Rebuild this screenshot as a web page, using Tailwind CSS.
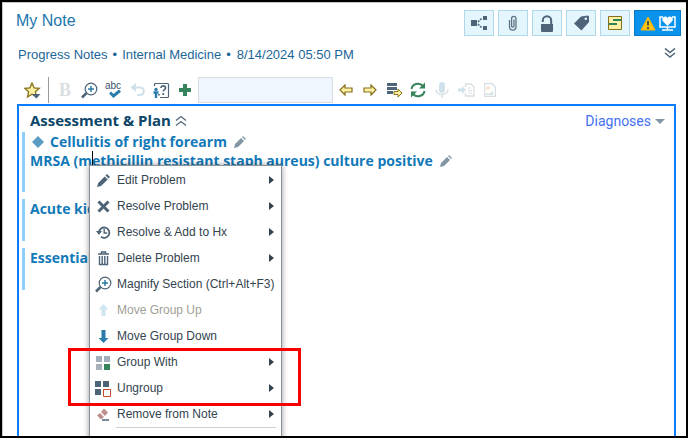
<!DOCTYPE html>
<html lang="en">
<head>
<meta charset="utf-8">
<meta name="viewport" content="width=device-width, initial-scale=1">
<title>My Note</title>
<script src="https://cdn.jsdelivr.net/npm/@tailwindcss/browser@4"></script>
</head>
<body class="bg-white font-['Liberation_Sans',Arial,sans-serif]">
<main class="relative flex h-screen flex-col overflow-hidden border-2 border-black">
  <div class="flex grow flex-col border-t border-l border-[#c8c8c8] pr-[3px] min-h-0">
    <header class="flex items-start justify-between pt-[7px] pl-[13px] pr-[2px]">
      <h1 class="pt-px text-base leading-5 text-[#1b75ad]">My Note</h1>
      <div class="flex gap-1">
        <button aria-label="Share" class="flex h-[26px] w-[30px] items-center justify-center border border-[#b0d8e8] bg-[#e3f6fd]">
          <svg width="18" height="16" viewBox="0 0 18 16" fill="#4d6478"><path d="M1 5h6v6H1zM13 1h4v4h-4zM13 11h4v4h-4z"/><path d="M8 7l4-4M8 9l4 4" stroke="#4d6478" stroke-width="1.5" stroke-dasharray="2 1"/></svg>
        </button>
        <button aria-label="Attach" class="flex h-[26px] w-[30px] items-center justify-center border border-[#b0d8e8] bg-[#e3f6fd]">
          <svg width="10" height="16" viewBox="0 0 10 16" fill="none" stroke="#5d7283" stroke-width="1.3"><path d="M1.5 5v7a3.2 3 0 0 0 6.5 0V3.500a2.200 2.200 0 0 0-4.400 0V11a1.200 1.200 0 0 0 2.400 0V4.500"/></svg>
        </button>
        <button aria-label="Unlock" class="flex h-[26px] w-[30px] items-center justify-center border border-[#b0d8e8] bg-[#e3f6fd]">
          <svg width="14" height="17" viewBox="0 0 14 17"><path d="M1 9h12v7a1 1 0 0 1-1 1H2a1 1 0 0 1-1-1z" fill="#4d6478"/><path d="M2.800 7V5.500a4 4 0 0 1 8.400 0V9" fill="none" stroke="#4d6478" stroke-width="2"/></svg>
        </button>
        <button aria-label="Tag" class="flex h-[26px] w-[30px] items-center justify-center border border-[#b0d8e8] bg-[#e3f6fd]">
          <svg width="17" height="16" viewBox="0 0 17 16"><path d="M1 8.500L8 1.500 15 .500 16 1.500V7L8.500 15.500z" fill="#4d6478"/><circle cx="12.800" cy="3.800" r="1.300" fill="#e3f6fd"/></svg>
        </button>
        <button aria-label="Sticky note" class="flex h-[26px] w-[30px] items-center justify-center border border-[#b0d8e8] bg-[#e3f6fd]">
          <svg width="14" height="14" viewBox="0 0 14 14"><path d="M.500.500h13v13H.500z" fill="#fdf0a4" stroke="#86701a"/><path d="M5 4h8M1 8h8" stroke="#2f8457" stroke-width="2"/></svg>
        </button>
        <button aria-label="Patient alerts" class="flex h-[26px] w-[47px] items-center justify-center gap-[3px] border border-[#0b79c4] bg-[#0a93ec]">
          <svg width="16" height="15" viewBox="0 0 16 15"><path d="M8 1L15 14H1z" fill="#fdc215" stroke="#f9b20a" stroke-linejoin="round"/><path d="M8 5v4.500M8 11v2" stroke="#4d5a3c" stroke-width="2"/></svg>
          <svg width="17" height="15" viewBox="0 0 17 15"><path d="M4 1H1v10h15V1h-3M8.500 11v3M3 14h11" fill="none" stroke="#fff" stroke-width="1.500"/><path d="M8.500 10L3.700 5a2.600 2.600 0 0 1 4.800-3 2.600 2.600 0 0 1 4.800 3z" fill="#fff"/></svg>
        </button>
      </div>
    </header>

    <div class="flex h-9 items-center justify-between pl-[15px] pr-[7px]">
      <p class="flex gap-[5px] pt-px text-[13px] leading-4 text-[#1b6698]"><span>Progress Notes</span><span>•</span><span>Internal Medicine</span><span>•</span><span class="pl-px">8/14/2024 05:50 PM</span></p>
      <button aria-label="Expand"><svg width="12" height="12" viewBox="0 0 12 12" fill="none" stroke="#52687b" stroke-width="1.600"><path d="M1 .500l5 4 5-4M1 5l5 4 5-4"/></svg></button>
    </div>

    <div class="mt-[5px] flex h-[26px] shrink-0 items-stretch pl-[17px]" role="toolbar" aria-label="Note tools">
      <button aria-label="Favorites" class="flex w-6 items-center justify-center"><svg width="17" height="17" viewBox="0 0 17 17"><path d="M8 1l2.100 4.800 5.200.500-3.900 3.500 1.100 5.200L8 12.300l-4.500 2.700 1.100-5.200L.700 6.300l5.200-.500z" fill="#fdf0a4" stroke="#86701a" stroke-width="1.300"/><path d="M8 12h8.500l-4.200 4.500z" fill="#4d6478"/></svg></button>
      <span class="mr-1 ml-1 w-px bg-[#9a9a9a]"></span>
      <button aria-label="Bold" disabled class="flex w-6 items-center justify-center font-['Liberation_Serif',serif] text-lg leading-5 font-bold text-[#d9dee1]">B</button>
      <button aria-label="Magnify" class="flex w-6 items-center justify-center"><svg width="17" height="17" viewBox="0 0 17 17" fill="none"><circle cx="10" cy="7" r="5.800" stroke="#4d6478" stroke-width="1.200"/><path d="M5.500 11L1 15.500" stroke="#4d6478" stroke-width="2.500"/><path d="M10 4v6M7 7h6" stroke="#2b7cab" stroke-width="1.500"/></svg></button>
      <button aria-label="Spelling" class="flex w-6 flex-col items-center justify-center"><span class="text-[10px] leading-2 text-[#3d5468]">abc</span><svg class="ml-1" width="12" height="8" viewBox="0 0 12 8" fill="none"><path d="M1 2.500L4.500 6 11 .500" stroke="#2b7cab" stroke-width="3"/></svg></button>
      <button aria-label="Undo" disabled class="flex w-6 items-center justify-center"><svg width="15" height="14" viewBox="0 0 15 14" fill="none"><path d="M3 4.500h7a3.700 3.700 0 0 1 0 7.500H7" stroke="#cfe2ec" stroke-width="2.200"/><path d="M6 0v9L.500 4.500z" fill="#cfe2ec"/></svg></button>
      <button aria-label="Patient help" class="flex w-6 items-center justify-center"><svg width="17" height="17" viewBox="0 0 17 17" fill="none"><path d="M1.500 4V2.500a1 1 0 0 1 1-1h12a1 1 0 0 1 1 1v12a1 1 0 0 1-1 1H7" stroke="#4d6478" stroke-width="1.200"/><path d="M8 6c0-3 4.500-2.500 4.500 0 0 1.800-2.200 1.500-2.200 3.500M10.300 11v2M6 12v1.500" stroke="#4d6478" stroke-width="1.700"/><circle cx="3" cy="7.500" r="1.700" fill="#2b7cab"/><path d="M.500 10.500h5M3 10v6" stroke="#2b7cab" stroke-width="2.400"/></svg></button>
      <button aria-label="Add" class="flex w-6 items-center justify-center"><svg width="12" height="12" viewBox="0 0 12 12"><path d="M4 0h4v4h4v4H8v4H4V8H0V4h4z" fill="#36845c"/></svg></button>
      <input aria-label="Insert text" class="ml-px w-[135px] border border-[#d9dde0] bg-[#eff6ff] px-1 text-xs">
      <button aria-label="Previous" class="ml-px flex w-6 items-center justify-center"><svg width="14" height="12" viewBox="0 0 14 12"><path d="M1 6L6 1v3h7v4H6v3z" fill="#fdf0a4" stroke="#86701a" stroke-width="1.200"/></svg></button>
      <button aria-label="Next" class="flex w-6 items-center justify-center"><svg width="14" height="12" viewBox="0 0 14 12"><path d="M13 6L8 1v3H1v4h7v3z" fill="#fdf0a4" stroke="#86701a" stroke-width="1.200"/></svg></button>
      <button aria-label="Insert list" class="flex w-6 items-center justify-center"><svg width="17" height="16" viewBox="0 0 17 16"><path d="M1 1h10v3H1zM1 5h10v3H1zM1 9h6v3H1z" fill="#4d6478"/><path d="M16 11l-4-4v2.500H8v3h4V15z" fill="#fdf0a4" stroke="#86701a"/></svg></button>
      <button aria-label="Refresh" class="flex w-6 items-center justify-center"><svg width="16" height="16" viewBox="0 0 16 16" fill="none" stroke="#36845c" stroke-width="2"><path d="M1.500 7a6.500 6 0 0 1 11.500-3M14.500 9A6.500 6 0 0 1 3 12"/><path d="M15 .500v6H9zM1 15.500v-6h6z" fill="#36845c" stroke="none"/></svg></button>
      <button aria-label="Dictate" disabled class="flex w-6 items-center justify-center"><svg width="14" height="16" viewBox="0 0 14 16" fill="none"><rect x="4" y="0" width="6" height="11" rx="3" fill="#cfe2ec"/><path d="M1 7.500a6 5 0 0 0 12 0M7 12v4" stroke="#d9dee1" stroke-width="1.500"/></svg></button>
      <button aria-label="Import" disabled class="flex w-6 items-center justify-center"><svg width="17" height="14" viewBox="0 0 17 14" fill="none"><path d="M7.500 4V1H13l3 3v9H7.500v-3" stroke="#d9dee1" stroke-width="1.300"/><path d="M10 5h3M10 7.500h4M10 10h4" stroke="#d9dee1"/><path d="M0 5.500h4V3l4 4-4 4V8.500H0z" fill="#cfe2ec"/></svg></button>
      <button aria-label="Insert image" disabled class="flex w-6 items-center justify-center"><svg width="12" height="14" viewBox="0 0 12 14" fill="none"><path d="M.700.700H8l3.300 3.300v9.300H.700z" stroke="#d9dee1" stroke-width="1.300"/><circle cx="4" cy="5" r="2" fill="#fbe4cf"/><path d="M2 12l0-2 3 1 4-3v4z" fill="#cfe3d8"/></svg></button>
    </div>

    <section class="relative mt-px mr-[7px] ml-[14px] grow border-2 border-b-0 border-[#0a7cff] pt-[5px] pl-[3px] font-['Open_Sans',sans-serif] text-sm font-bold text-[#1279b8]">
      <div class="flex h-5 items-center justify-between pr-[9px] pl-2">
        <h2 class="flex items-center gap-1 text-[15px] text-[#0d4668]">Assessment &amp; Plan
          <button aria-label="Collapse"><svg width="12" height="12" viewBox="0 0 12 12" fill="none" stroke="#52687b" stroke-width="1.300"><path d="M1 5.500l5-4 5 4M1 10.500l5-4 5 4"/></svg></button></h2>
        <button class="flex items-center gap-1 font-['Roboto',sans-serif] text-sm font-normal text-[#4470f5]">Diagnoses<svg width="10" height="5" viewBox="0 0 10 5"><path d="M0 0h10L5 5z" fill="#8295a3"/></svg></button>
      </div>
      <div class="mt-px h-[60px] border-l-[3px] border-[#8fd0fb] pl-[5px]">
        <p class="flex h-[19px] items-center"><svg class="mr-1 ml-px" width="14" height="12" viewBox="0 0 14 12"><path d="M7 0l6 6-6 6-6-6z" fill="#5c9cc3"/></svg><span class="pl-px">Cellulitis of right forearm</span>
          <svg class="ml-[7px]" width="12" height="12" viewBox="0 0 12 12" fill="#8295a3"><path d="M0 12l1-4 6-6 3 3-6 6zM8 1l1-1 3 3-1 1z"/></svg></p>
        <p class="flex h-[19px] items-center"><span>MRSA (methicillin resistant staph aureus) culture positive</span>
          <svg class="ml-[7px]" width="12" height="12" viewBox="0 0 12 12" fill="#8295a3"><path d="M0 12l1-4 6-6 3 3-6 6zM8 1l1-1 3 3-1 1z"/></svg></p>
      </div>
      <div class="mt-[7px] h-[42px] border-l-[3px] border-[#8fd0fb] pl-[5px]"><p class="leading-5">Acute kid</p></div>
      <div class="mt-[7px] h-[42px] border-l-[3px] border-[#8fd0fb] pl-[5px]"><p class="leading-5">Essential</p></div>

      <span class="absolute top-[45px] left-[73px] h-4 w-px bg-black"></span>

      <ul role="menu" class="absolute top-[59px] left-[70px] w-[193px] border border-[#8a939b] bg-white pt-px pb-4 font-['Liberation_Sans',Arial,sans-serif] text-xs font-normal text-[#33444f] shadow-[0_0_6px_rgba(0,0,0,0.4)]">
        <li><button role="menuitem" class="flex h-[26px] w-full items-center pr-[7px] pl-[5px]"><svg class="mr-[5px]" width="17" height="17" viewBox="0 0 17 17" fill="#4d6478"><path d="M2 15l1.200-4 6.500-6.500 3 3L6 14zM10.500 3.500l1.500-1.500 3 3-1.500 1.500z"/></svg>Edit Problem<svg class="ml-auto" width="5" height="8" viewBox="0 0 5 8"><path d="M0 0l5 4-5 4z" fill="#33444f"/></svg></button></li>
        <li><button role="menuitem" class="flex h-[26px] w-full items-center pr-[7px] pl-[5px]"><svg class="mr-[5px]" width="17" height="17" viewBox="0 0 17 17"><path d="M3.500 3.500l10 10M13.500 3.500l-10 10" stroke="#4d6478" stroke-width="3"/></svg>Resolve Problem<svg class="ml-auto" width="5" height="8" viewBox="0 0 5 8"><path d="M0 0l5 4-5 4z" fill="#33444f"/></svg></button></li>
        <li><button role="menuitem" class="flex h-[26px] w-full items-center pr-[7px] pl-[5px]"><svg class="mr-[5px]" width="17" height="17" viewBox="0 0 17 17" fill="none" stroke="#4d6478"><path d="M4 8.500a5.200 5.200 0 1 1 2 4.300" stroke-width="1.800"/><path d="M1 7h6l-3 4z" fill="#4d6478" stroke="none"/><path d="M9.200 5v4h3" stroke-width="1.400"/></svg>Resolve &amp; Add to Hx<svg class="ml-auto" width="5" height="8" viewBox="0 0 5 8"><path d="M0 0l5 4-5 4z" fill="#33444f"/></svg></button></li>
        <li><button role="menuitem" class="flex h-[26px] w-full items-center pr-[7px] pl-[5px]"><svg class="mr-[5px]" width="17" height="17" viewBox="0 0 17 17" fill="none" stroke="#4d6478"><path d="M3 4h11M6.500 4V2h4v2" stroke-width="1.500"/><path d="M4.500 6v8.500h8V6M7.200 6v8M9.800 6v8" stroke-width="1.400"/></svg>Delete Problem<svg class="ml-auto" width="5" height="8" viewBox="0 0 5 8"><path d="M0 0l5 4-5 4z" fill="#33444f"/></svg></button></li>
        <li><button role="menuitem" class="flex h-[26px] w-full items-center pl-[5px] whitespace-nowrap"><svg class="mr-[5px] shrink-0" width="17" height="17" viewBox="0 0 17 17" fill="none"><circle cx="10" cy="7" r="5.800" stroke="#4d6478" stroke-width="1.200"/><path d="M5.500 11L1 15.500" stroke="#4d6478" stroke-width="2.500"/><path d="M10 4v6M7 7h6" stroke="#2b7cab" stroke-width="1.500"/></svg>Magnify Section (Ctrl+Alt+F3)</button></li>
        <li><button role="menuitem" disabled class="flex h-[26px] w-full items-center pl-[5px] text-[#a09f96]"><svg class="mr-[5px]" width="17" height="17" viewBox="0 0 17 17"><path d="M8.500 2l5 5.500h-3V14h-4V7.500h-3z" fill="#cfe6f0"/></svg>Move Group Up</button></li>
        <li><button role="menuitem" class="flex h-[26px] w-full items-center pl-[5px]"><svg class="mr-[5px]" width="17" height="17" viewBox="0 0 17 17"><path d="M8.500 15l5-5h-3V2h-4v8h-3z" fill="#2b7cab"/></svg>Move Group Down</button></li>
        <li><button role="menuitem" class="flex h-[26px] w-full items-center pr-[7px] pl-[5px]"><svg class="mr-[5px]" width="17" height="17" viewBox="0 0 17 17"><path d="M1 2h6v6H1zM9 2h6v6H9zM1 10h6v6H1z" fill="#a5b0ba"/><path d="M9 10h6v6H9z" fill="#36845c"/></svg>Group With<svg class="ml-auto" width="5" height="8" viewBox="0 0 5 8"><path d="M0 0l5 4-5 4z" fill="#33444f"/></svg></button></li>
        <li><button role="menuitem" class="flex h-[26px] w-full items-center pr-[7px] pl-[5px]"><svg class="mr-[5px]" width="17" height="17" viewBox="0 0 17 17"><path d="M0 1h6v6H0zM8 1h6v6H8zM0 9h6v6H0z" fill="#4d6478"/><path d="M8.500 9.500h7v7h-7z" fill="#fff" stroke="#c8472b"/></svg>Ungroup<svg class="ml-auto" width="5" height="8" viewBox="0 0 5 8"><path d="M0 0l5 4-5 4z" fill="#33444f"/></svg></button></li>
        <li><button role="menuitem" class="flex h-[26px] w-full items-center pr-[7px] pl-[5px]"><svg class="mr-[5px]" width="17" height="17" viewBox="0 0 17 17"><path d="M2 9.500l3-2.500 4 4-3 2.500zM6 6l3-3.500 4 4L10 10z" fill="#bd9090"/><path d="M7 14h7" stroke="#4d6478" stroke-width="1.500"/></svg>Remove from Note<svg class="ml-auto" width="5" height="8" viewBox="0 0 5 8"><path d="M0 0l5 4-5 4z" fill="#33444f"/></svg></button></li>
        <li role="separator" class="mr-[5px] ml-[26px] border-t border-[#d0d0d0]"></li>
      </ul>
      <div class="pointer-events-none absolute top-[242px] left-[49px] h-[58px] w-[233px] border-3 border-[#f60000]"></div>
    </section>
  </div>
</main>
</body>
</html>
